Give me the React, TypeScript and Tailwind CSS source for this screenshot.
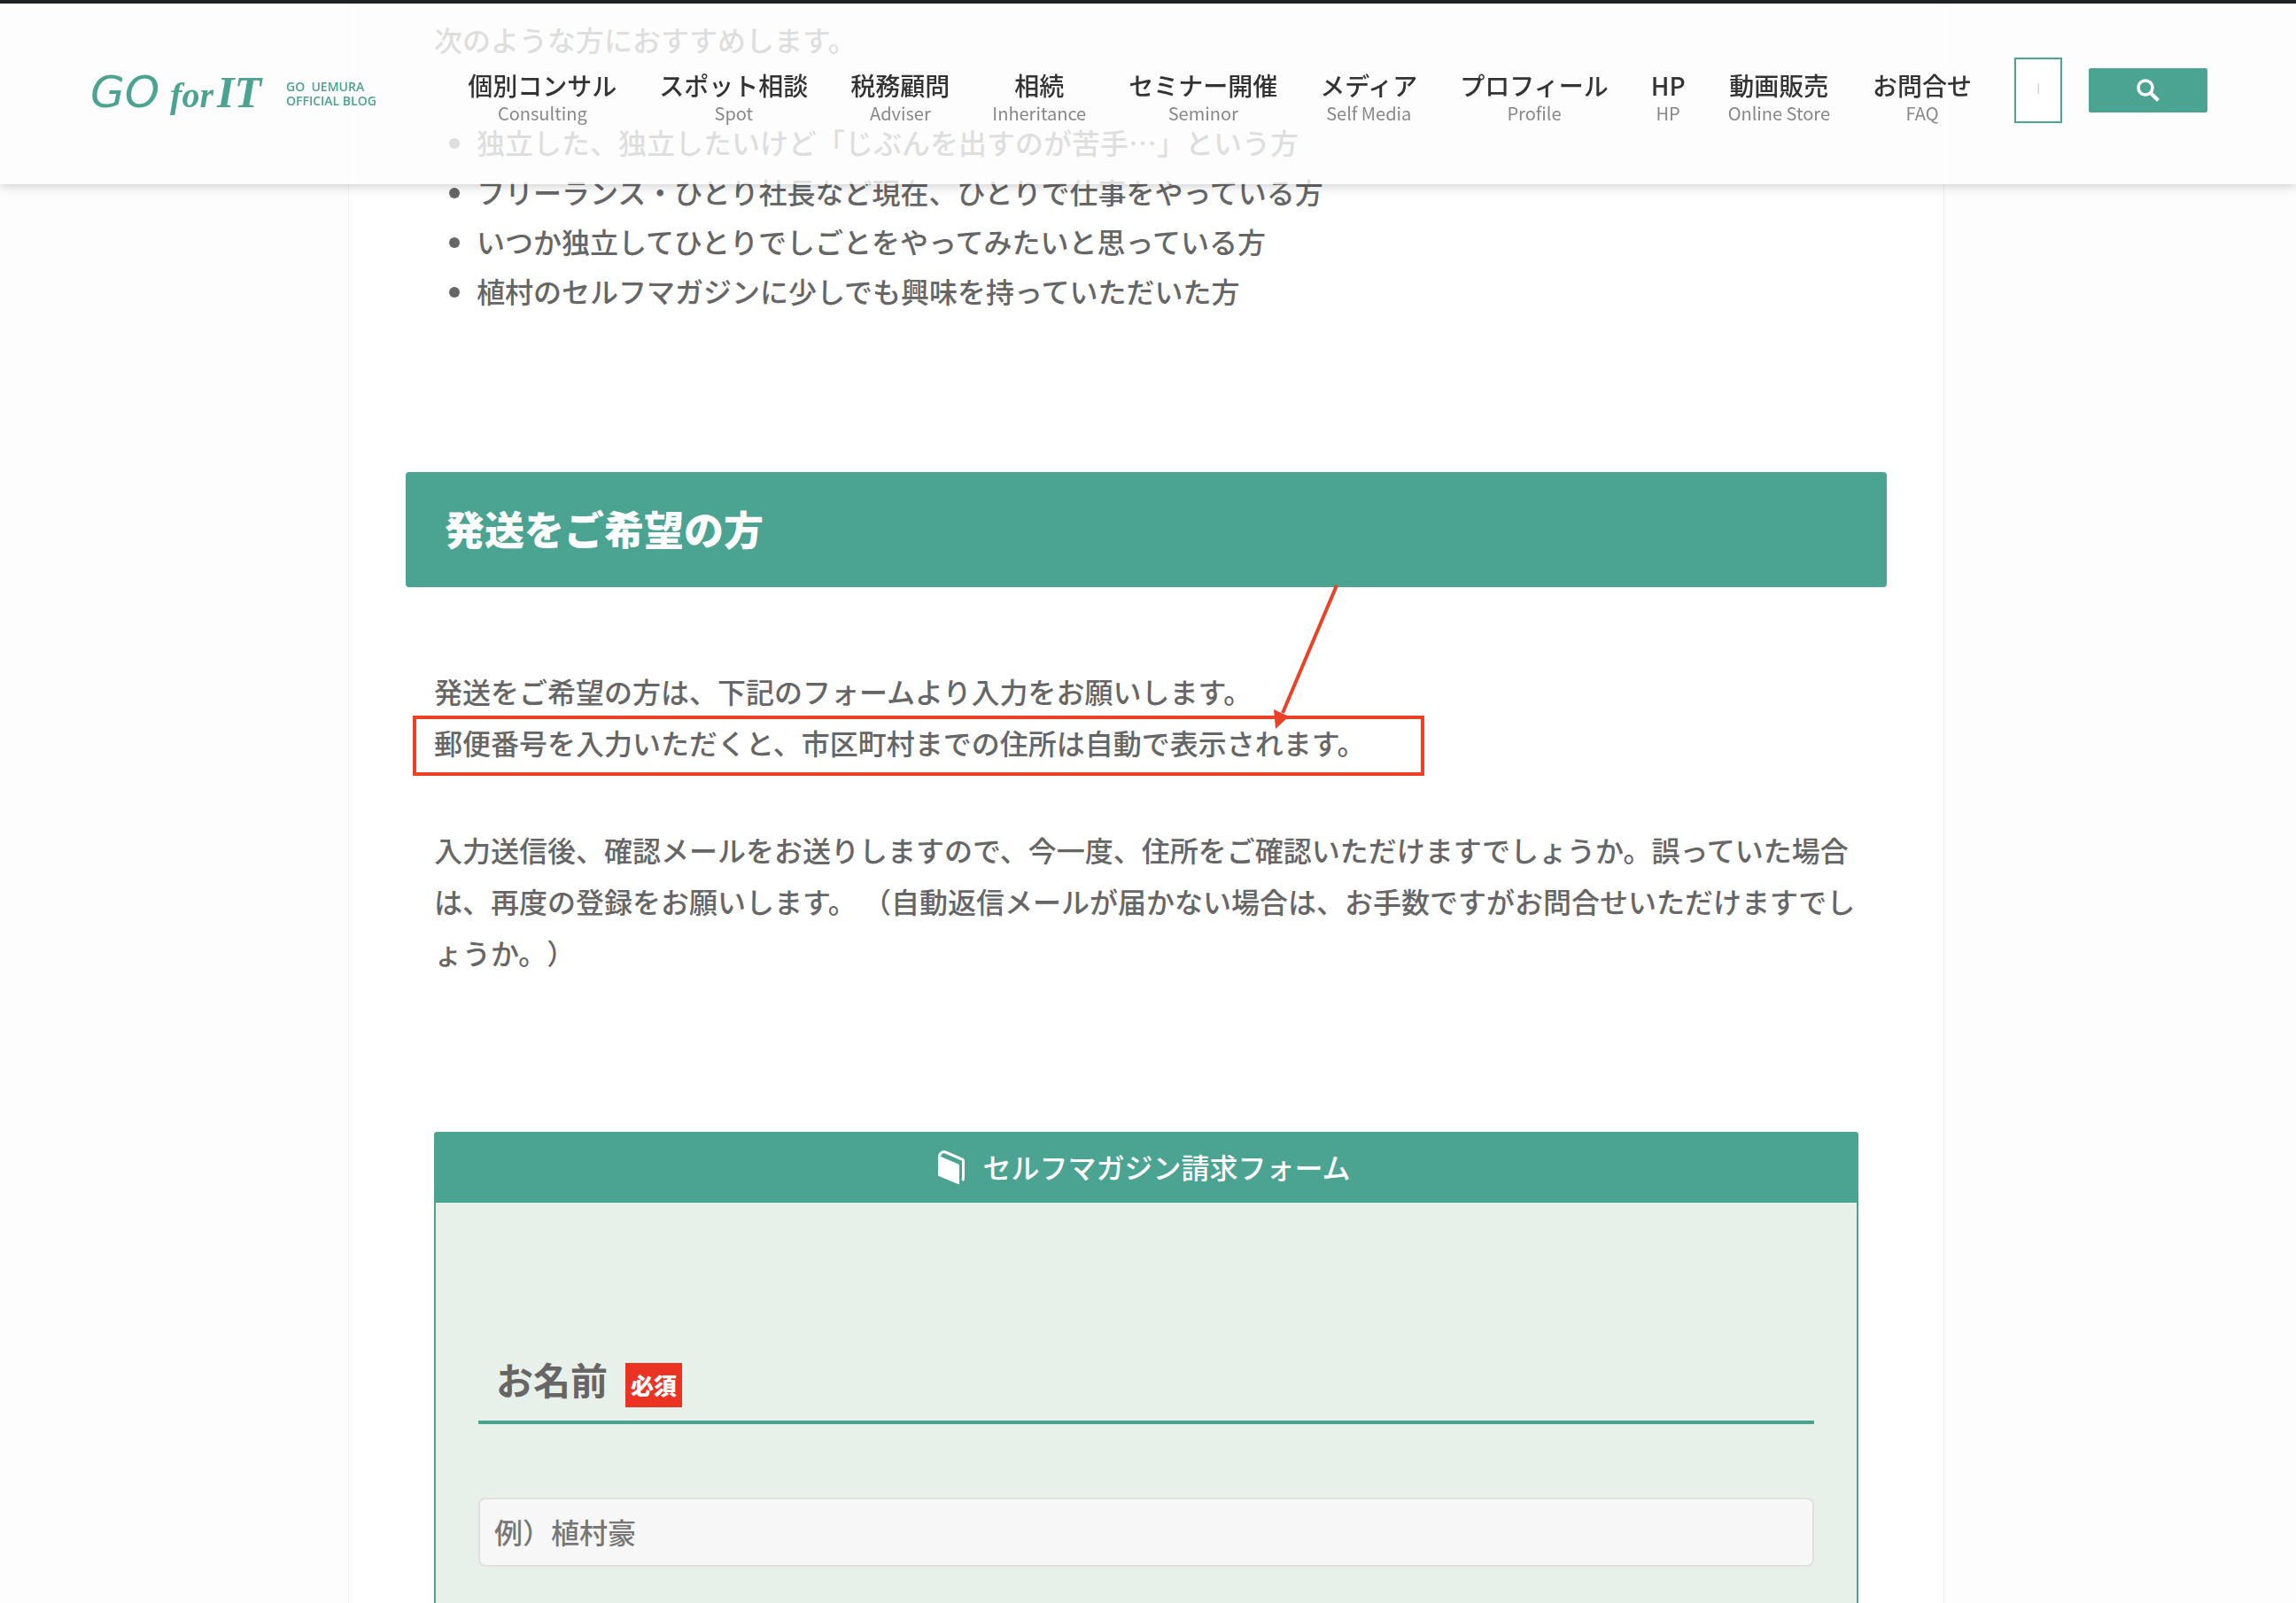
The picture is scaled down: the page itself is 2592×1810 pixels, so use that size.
const NAV_ITEMS = [
  { label: "個別コンサル", sub: "Consulting" },
  { label: "スポット相談", sub: "Spot" },
  { label: "税務顧問", sub: "Adviser" },
  { label: "相続", sub: "Inheritance" },
  { label: "セミナー開催", sub: "Seminor" },
  { label: "メディア", sub: "Self Media" },
  { label: "プロフィール", sub: "Profile" },
  { label: "HP", sub: "HP" },
  { label: "動画販売", sub: "Online Store" },
  { label: "お問合せ", sub: "FAQ" },
];

const RECOMMENDED = [
  "独立した、独立したいけど「じぶんを出すのが苦手…」という方",
  "フリーランス・ひとり社長など現在、ひとりで仕事をやっている方",
  "いつか独立してひとりでしごとをやってみたいと思っている方",
  "植村のセルフマガジンに少しでも興味を持っていただいた方",
];

function Logo() {
  return (
    <a href="#" className="flex items-center gap-7 pt-2 text-[#4ba391]">
      <span className="flex items-baseline whitespace-nowrap italic leading-10">
        <span className="font-['DejaVu_Sans',sans-serif] text-[50px]">GO</span>
        <span className="ml-3 font-['Liberation_Serif',serif] text-[40px] font-bold">for</span>
        <span className="ml-1 font-['Liberation_Serif',serif] text-[50px] font-bold">IT</span>
      </span>
      <span className="whitespace-pre font-['Open_Sans',sans-serif] text-[14px] font-semibold leading-4">
        {"GO  UEMURA\nOFFICIAL BLOG"}
      </span>
    </a>
  );
}

function SearchIcon() {
  return (
    <svg viewBox="0 0 26 26" className="size-[26px]" fill="none" stroke="currentColor" aria-hidden="true">
      <circle cx="10" cy="10" r="8" strokeWidth="3.500" />
      <path d="M15 15 L24.500 24.500" strokeWidth="4" />
    </svg>
  );
}

function Header() {
  return (
    <header className="fixed inset-x-0 top-0 z-10 flex h-[208px] items-center justify-between border-t-4 border-[#1d2327] bg-[#fdfdfd]/80 pr-[100px] pb-2 pl-[102px] shadow-[0_2px_12px_rgba(0,0,0,0.2)]">
      <Logo />
      <div className="flex items-center">
        <nav className="flex gap-12 pt-4">
          {NAV_ITEMS.map((item) => (
            <a key={item.label} href="#" className="flex flex-col items-center whitespace-nowrap">
              <span className="text-[28px] font-medium leading-9 text-[#333]">{item.label}</span>
              <span className="text-[20px] leading-7 text-[#888]">{item.sub}</span>
            </a>
          ))}
        </nav>
        <form className="ml-12 flex items-center gap-[30px]">
          <input
            type="text"
            aria-label="サイト内検索"
            placeholder="|"
            className="h-[74px] w-[54px] border-2 border-[#4ba391] bg-white pb-2 text-center text-[10px] placeholder:text-gray-400"
          />
          <button
            type="button"
            aria-label="検索"
            className="flex h-[50px] w-[134px] items-center justify-center rounded-xs bg-[#4ba391] text-white"
          >
            <SearchIcon />
          </button>
        </form>
      </div>
    </header>
  );
}

function BookIcon() {
  return (
    <svg viewBox="0 0 30 38" className="h-[38px] w-[30px]" fill="currentColor" aria-hidden="true">
      <path d="M1 6 L23 15.5 Q24 16 24 17 V37 Q24 38.5 22.500 38 L1 29 Q0 28.500 0 27.500 V5 Z" />
      <path
        d="M1.500 6 Q3 1.500 7.500 1.500 L27 10 Q28.500 10.500 28.500 12 V31.500 Q28.500 33 27.500 34"
        fill="none"
        stroke="currentColor"
        strokeWidth="3"
      />
    </svg>
  );
}

function MagazineForm() {
  return (
    <form className="mt-[174px] flex flex-1 flex-col rounded-t-sm border-x-2 border-[#4ba391] bg-[#e7f1e9]">
      <div className="-mx-0.5 flex h-20 items-center justify-center gap-5 rounded-t-sm bg-[#4ba391] pr-1 text-[32px] text-white">
        <BookIcon />
        <span className="pb-0.5">セルフマガジン請求フォーム</span>
      </div>
      <div className="px-12 pt-[171px] pb-10">
        <label
          htmlFor="your-name"
          className="flex h-[79px] items-start gap-5 border-b-4 border-[#4ba391] pl-5 text-[42px] font-bold leading-[56px]"
        >
          お名前
          <span className="mt-2.5 bg-[#eb3324] px-1.5 text-[26px] font-black leading-[50px] text-white">必須</span>
        </label>
        <input
          id="your-name"
          type="text"
          placeholder="例）植村豪"
          className="mt-[83px] h-[78px] w-full rounded-lg border-2 border-[#e0e0e0] bg-[#f7f7f7] px-4 pb-0.5 text-[32px] placeholder:text-[#777]"
        />
      </div>
    </form>
  );
}

// Red frame round the postcode line, with an arrow that points at it from the heading
function PostcodeNote() {
  return (
    <span className="relative block">
      郵便番号を入力いただくと、市区町村までの住所は自動で表示されます。
      <span className="absolute -top-px -left-6 h-[68px] w-[1142px] border-4 border-[#ed4126]" />
      <svg
        viewBox="0 0 80 170"
        className="absolute -top-[151px] left-[944px] h-[170px] w-20 text-[#ed4126]"
        aria-hidden="true"
      >
        <path d="M75 3 L14 147" stroke="currentColor" strokeWidth="4" />
        <path d="M4 143 L21 151 L6 165 Z" fill="currentColor" />
      </svg>
    </span>
  );
}

export default function App() {
  return (
    <div
      lang="ja"
      className="flex min-h-screen flex-col bg-[#fdfdfd] pr-1 font-['Noto_Sans_CJK_JP',sans-serif] text-[#666]"
    >
      <Header />
      <main className="mx-auto flex w-full max-w-[1802px] flex-1 flex-col border-x border-[#f0f0f0] bg-white px-24 pt-[15px] text-[32px] font-medium leading-[58px] [text-spacing-trim:space-all]">
        <p>次のような方におすすめします。</p>
        <ul className="mt-[59px] list-disc pl-12 leading-[56px]">
          {RECOMMENDED.map((text) => (
            <li key={text}>{text}</li>
          ))}
        </ul>
        <h2 className="-mx-8 mt-[177px] rounded-sm bg-[#4ba391] px-11 pt-[31px] pb-[33px] text-[45px] font-black leading-[66px] text-white">
          発送をご希望の方
        </h2>
        <p className="mt-[88px]">
          発送をご希望の方は、下記のフォームより入力をお願いします。
          <PostcodeNote />
        </p>
        <p className="mt-[63px]">
          入力送信後、確認メールをお送りしますので、今一度、住所をご確認いただけますでしょうか。誤っていた場合は、再度の登録をお願いします。 （自動返信メールが届かない場合は、お手数ですがお問合せいただけますでしょうか。）
        </p>
        <MagazineForm />
      </main>
    </div>
  );
}
